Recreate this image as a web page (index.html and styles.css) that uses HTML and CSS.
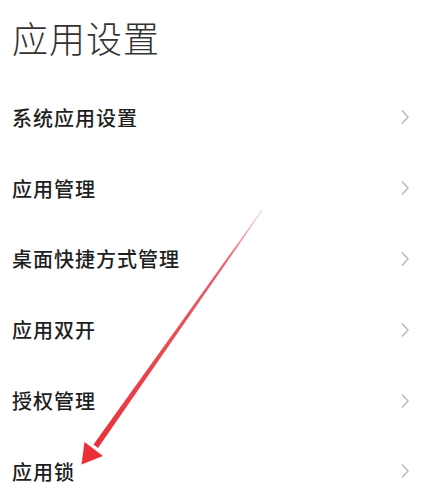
FILE: index.html
```html
<!DOCTYPE html>
<html lang="zh">
<head>
<meta charset="utf-8">
<link rel="stylesheet" href="styles.css">
</head>
<body>
<div class="page">
  <h1 class="title">应用设置</h1>
  <ul class="list">
    <li class="row"><span class="label">系统应用设置</span><svg class="chev" viewBox="0 0 8 16"><path d="M1 1.5 L7 8 L1 14.5"/></svg></li>
    <li class="row"><span class="label">应用管理</span><svg class="chev" viewBox="0 0 8 16"><path d="M1 1.5 L7 8 L1 14.5"/></svg></li>
    <li class="row"><span class="label">桌面快捷方式管理</span><svg class="chev" viewBox="0 0 8 16"><path d="M1 1.5 L7 8 L1 14.5"/></svg></li>
    <li class="row"><span class="label">应用双开</span><svg class="chev" viewBox="0 0 8 16"><path d="M1 1.5 L7 8 L1 14.5"/></svg></li>
    <li class="row"><span class="label">授权管理</span><svg class="chev" viewBox="0 0 8 16"><path d="M1 1.5 L7 8 L1 14.5"/></svg></li>
    <li class="row"><span class="label">应用锁</span><svg class="chev" viewBox="0 0 8 16"><path d="M1 1.5 L7 8 L1 14.5"/></svg></li>
  </ul>
  <svg class="arrow" viewBox="0 0 426 500" width="426" height="500">
    <defs>
      <linearGradient id="g" x1="262" y1="210" x2="90" y2="455" gradientUnits="userSpaceOnUse">
        <stop offset="0" stop-color="#f4b8bd" stop-opacity="0.6"/>
        <stop offset="0.2" stop-color="#e9616a"/>
        <stop offset="1" stop-color="#ea2f38"/>
      </linearGradient>
    </defs>
    <polygon points="262,209.5 262.6,210.5 98,448 93.5,444.5" fill="url(#g)"/>
    <polygon points="81.5,464.5 84.5,442 103,456" fill="#ea2f38"/>
  </svg>
</div>
</body>
</html>
```
FILE: styles.css
```css
html, body {
  margin: 0;
  padding: 0;
  background: #ffffff;
}
.page {
  position: relative;
  width: 426px;
  height: 500px;
  overflow: hidden;
  font-family: "Noto Sans CJK SC", "Noto Sans", sans-serif;
}
.title {
  margin: 0;
  height: 82px;
  padding: 0 0 8px 12px;
  box-sizing: border-box;
  display: flex;
  align-items: center;
  font-size: 36px;
  font-weight: 300;
  color: #333333;
  letter-spacing: 1px;
}
.list {
  list-style: none;
  margin: 0;
  padding: 0;
}
.row {
  height: 70.8px;
  display: flex;
  align-items: center;
  justify-content: space-between;
  padding: 0 17px 0 12px;
}
.label {
  font-size: 20px;
  font-weight: 500;
  color: #1e1e1e;
  letter-spacing: 1px;
}
.chev {
  width: 8px;
  height: 16px;
  fill: none;
  stroke: #b8b8b8;
  stroke-width: 1.4;
}
.arrow {
  position: absolute;
  left: 0;
  top: 0;
  pointer-events: none;
}
```
